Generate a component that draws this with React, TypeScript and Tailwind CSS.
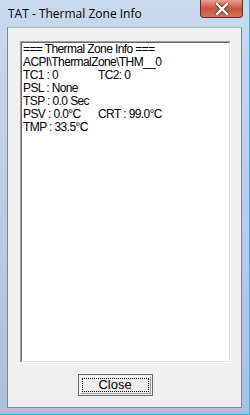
const lines: [string, string?][] = [
  ['=== Thermal Zone Info ==='],
  ['ACPI\\ThermalZone\\THM__0'],
  ['TC1 : 0', 'TC2: 0'],
  ['PSL : None'],
  ['TSP : 0.0 Sec'],
  ['PSV : 0.0°C', 'CRT : 99.0°C'],
  ['TMP : 33.5°C'],
]

const App = () => {
  return (
    <div className='w-[250px] h-[415px] flex flex-col bg-gradient-to-b from-[#c9daee] via-[#b9cde6] to-[#a9c0dc] border-b border-r border-[#2bb6e3]'>

      <div className='h-[27px] flex flex-row items-start justify-between shrink-0'>
        <div className='pl-[8px] pt-[6px] text-[12px] leading-[16px] text-black' style={{ fontFamily: '"Open Sans", "Noto Sans", sans-serif' }}>
          TAT - Thermal Zone Info
        </div>
        <div className='mr-[6px] w-[43px] h-[18px] rounded-b-[4px] border border-t-0 border-[#6b2a22] bg-gradient-to-b from-[#e7a092] via-[#c9533e] to-[#d1735f] flex items-center justify-center'>
          <svg width='14' height='12' viewBox='0 0 14 12'>
            <path d='M2 1 L12 11 M12 1 L2 11' stroke='#4a4a4a' strokeWidth='4.2' strokeLinecap='square' />
            <path d='M2 1 L12 11 M12 1 L2 11' stroke='#ffffff' strokeWidth='2.4' strokeLinecap='square' />
          </svg>
        </div>
      </div>

      <div className='flex-1 mx-[7px] mb-[6px] bg-[#f0f0f0] border border-[#7c8794] border-t-[#a9b5c2] flex flex-col'>

        <div className='mt-[13px] ml-[12px] mr-[10px] h-[322px] border border-[#a0a0a0] border-b-white border-r-white'>
          <div className='w-full h-full border border-[#696969] border-b-[#e3e3e3] border-r-[#e3e3e3] bg-white pl-[1px] pt-0'
            style={{ fontFamily: '"Liberation Sans", Arial, sans-serif' }}>
            {
              lines.map((item, index) => (
                <div className='flex flex-row h-[13px] text-[12px] leading-[13px] text-black tracking-[-0.6px]' key={index}>
                  <div className='w-[75px] whitespace-nowrap'>{item[0]}</div>
                  {item[1] && <div className='whitespace-nowrap'>{item[1]}</div>}
                </div>
              ))
            }
          </div>
        </div>

        <div className='flex justify-center mt-[11px] pr-[19px]'>
          <div className='w-[75px] h-[22px] border border-[#696969] bg-[#f0f0f0] p-[1px]'>
            <div className='w-full h-full border border-white border-b-[#a0a0a0] border-r-[#a0a0a0] p-[1px]'>
              <div className='w-full h-full border border-dotted border-black flex items-center justify-center text-[13px] text-black'
                style={{ fontFamily: '"Liberation Sans", Arial, sans-serif' }}>
                Close
              </div>
            </div>
          </div>
        </div>

      </div>
    </div>
  )
}

export default App
